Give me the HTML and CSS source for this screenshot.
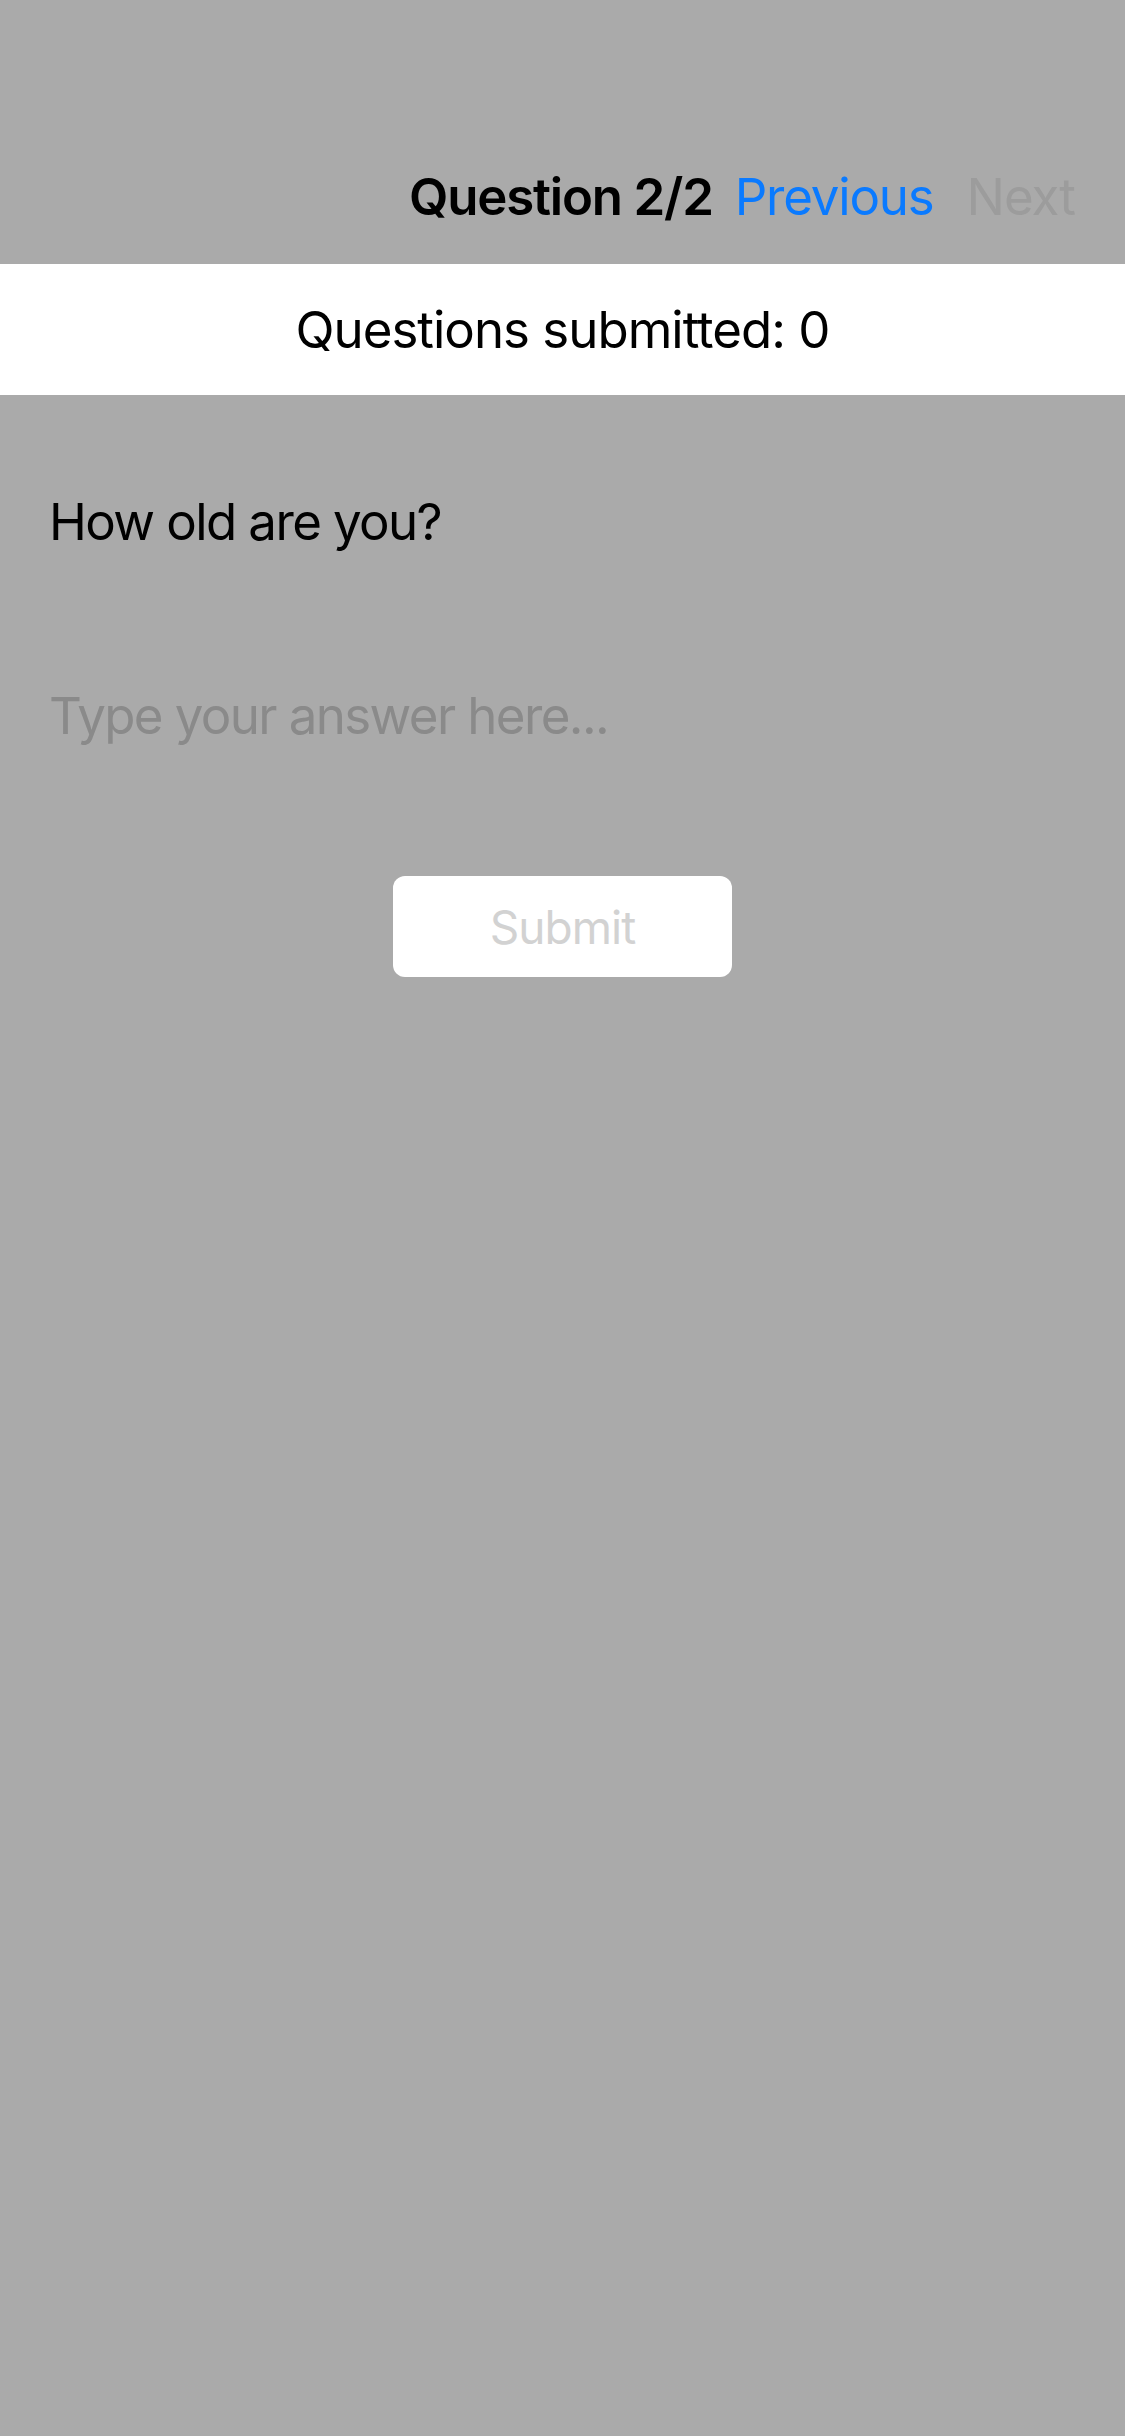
FILE: index.html
```html
<!DOCTYPE html>
<html lang="en">
<head>
<meta charset="utf-8">
<title>Question 2/2</title>
<link rel="stylesheet" href="styles.css">
</head>
<body>
<header class="topbar">
  <span class="title">Question 2/2</span>
  <span class="nav nav-prev">Previous</span>
  <span class="nav nav-next">Next</span>
</header>
<div class="status">Questions submitted: 0</div>
<main class="content">
  <p class="question">How old are you?</p>
  <input class="answer" type="text" placeholder="Type your answer here...">
  <div class="actions">
    <button class="submit" type="button" disabled>Submit</button>
  </div>
</main>
</body>
</html>
```

FILE: styles.css
```css
html, body {
  margin: 0;
  padding: 0;
}
body {
  width: 1125px;
  min-height: 2436px;
  background: #aaaaaa;
  font-family: "Inter", "Roboto", "Noto Sans", sans-serif;
  font-size: 51px;
  color: #000;
  letter-spacing: -1px;
}
.topbar {
  height: 264px;
  box-sizing: border-box;
  display: flex;
  justify-content: flex-end;
  align-items: flex-start;
  padding: 166px 50px 0 0;
  line-height: 62px;
}
.title {
  font-weight: 600;
  letter-spacing: -1.2px;
  margin-right: 22px;
}
.nav-prev {
  color: #0a7aff;
  letter-spacing: -1.2px;
  margin-right: 33px;
}
.nav-next {
  color: #9c9c9c;
}
.status {
  height: 131px;
  background: #ffffff;
  display: flex;
  align-items: center;
  justify-content: center;
}
.content {
  padding: 0 49px;
}
.question {
  margin: 97px 0 0;
  line-height: 60px;
  letter-spacing: -1.6px;
}
.answer {
  display: block;
  width: 100%;
  box-sizing: border-box;
  margin-top: 113px;
  height: 100px;
  padding: 0;
  border: none;
  background: transparent;
  font: inherit;
  letter-spacing: -1.6px;
  color: #000;
  outline: none;
}
.answer::placeholder {
  color: #8a8a8a;
}
.actions {
  display: flex;
  justify-content: center;
  margin-top: 111px;
}
.submit {
  width: 339px;
  height: 101px;
  border: none;
  border-radius: 12px;
  background: #ffffff;
  font: inherit;
  font-size: 46px;
  letter-spacing: -1px;
  color: #d2d2d2;
}
```
